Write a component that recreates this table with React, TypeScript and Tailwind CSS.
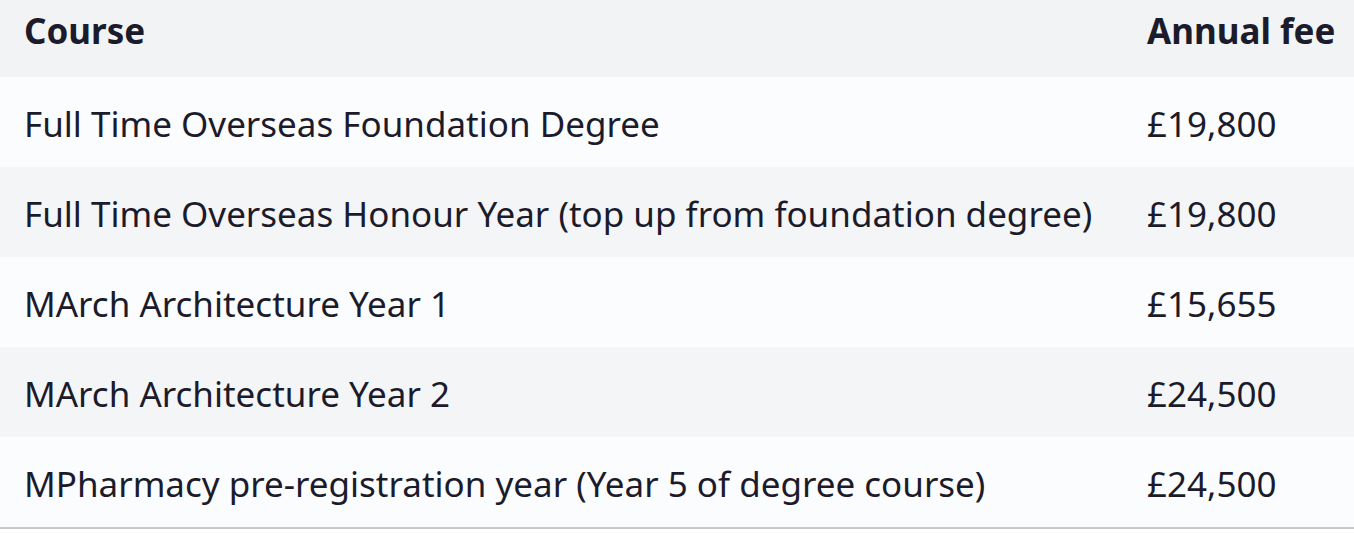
import React from "react";

const rows = [
  { course: "Full Time Overseas Foundation Degree", fee: "£19,800" },
  { course: "Full Time Overseas Honour Year (top up from foundation degree)", fee: "£19,800" },
  { course: "MArch Architecture Year 1", fee: "£15,655" },
  { course: "MArch Architecture Year 2", fee: "£24,500" },
  { course: "MPharmacy pre-registration year (Year 5 of degree course)", fee: "£24,500" },
];

const App = () => {
  return (
    <div className="w-[1354px] h-[534px] bg-white text-[#1c1b2b] font-['Noto_Sans',sans-serif] overflow-hidden">
      <div className="grid grid-cols-[1123px_1fr] h-[77px] items-center pb-[14px] bg-[#f2f3f5] text-[35px] font-bold">
        <div className="pl-6">Course</div>
        <div className="pl-6">Annual fee</div>
      </div>
      {rows.map((row, i) => (
        <div
          key={i}
          className={`grid grid-cols-[1123px_1fr] h-[90px] items-center pt-1 text-[35px] ${i % 2 === 0 ? "bg-[#fbfcfe]" : "bg-[#f4f5f7]"}`}
        >
          <div className="pl-6">{row.course}</div>
          <div className="pl-6">{row.fee}</div>
        </div>
      ))}
      <div className="h-[2px] bg-[#c8c9cc]" />
    </div>
  );
};

export default App;
